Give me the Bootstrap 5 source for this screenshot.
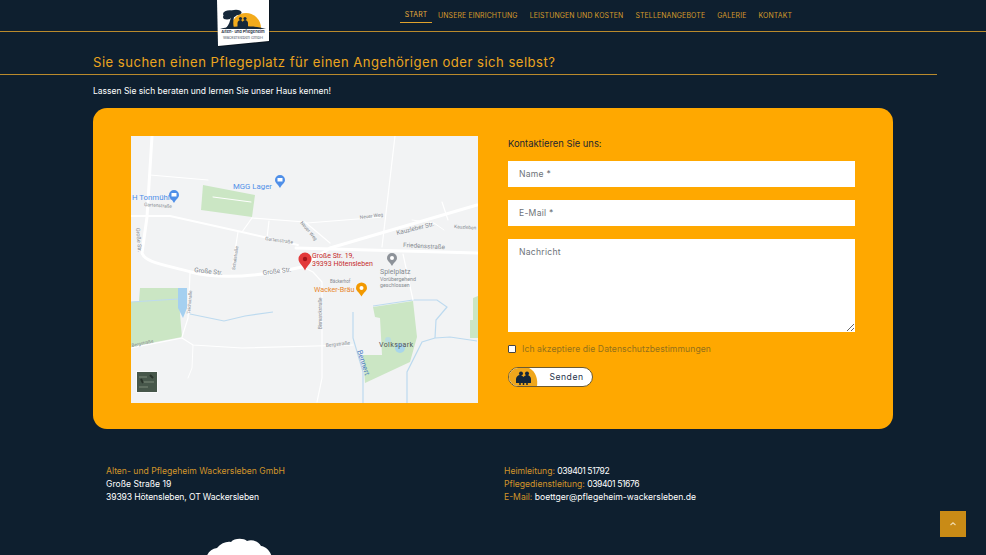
<!DOCTYPE html>
<html lang="de">
<head>
    <meta charset="UTF-8">
    <meta name="viewport" content="width=device-width, initial-scale=1.0">
    <title>Alten- und Pflegeheim Wackersleben</title>
    <link href="https://cdn.jsdelivr.net/npm/bootstrap@5.3.0/dist/css/bootstrap.min.css" rel="stylesheet">
    <style>
        html, body {
            height: 100%;
            overflow: hidden;
        }

        body {
            background: #0e1f2f;
            color: #fff;
            font-family: Inter, "Open Sans", sans-serif;
            font-size: 8.6px;
            line-height: 13px;
        }

        .navbar.top-bar {
            height: 31px;
            position: relative;
            justify-content: flex-start;
        }

        .top-rule {
            height: 1px;
            background: #b98a2c;
        }

        .top-bar .navbar-nav {
            margin-left: 400px;
            margin-top: 7px;
        }

        .navbar-expand .navbar-nav .nav-link {
            color: #d59a2a;
            font-size: 6.9px;
            line-height: 15px;
            padding: 1px 0 0;
            margin-right: 12px;
            letter-spacing: .15px;
        }

        .navbar-expand .navbar-nav .nav-link.active {
            color: #e8ad3b;
            border-bottom: 1px solid #e0a22c;
            padding: 0 4px 1px;
            margin-right: 6px;
            height: 16px;
            width: 32px;
            text-align: center;
        }

        .logo-sheet {
            position: absolute;
            left: 215px;
            top: 0;
        }

        .page-title {
            width: 937px;
            border-bottom: 1px solid #b98a2c;
            color: #eba51f;
            font-size: 13.1px;
            font-weight: 400;
            letter-spacing: .48px;
            line-height: 20px;
            margin: 20px 0 0;
            padding: 0 0 2px 93px;
        }

        .page-intro {
            margin: 10px 0 10px 93px;
            font-size: 8.5px;
            line-height: 13px;
        }

        .contact-panel {
            width: 800px;
            height: 321px;
            margin-left: 93px;
            padding: 28px 38px;
            background: #ffa800;
            border-radius: 14px;
            gap: 30px;
        }

        .map-box {
            width: 347px;
            height: 267px;
            flex: none;
            display: block;
        }

        .form-box {
            width: 347px;
            flex: none;
        }

        .form-box h6 {
            color: #1b2530;
            font-size: 9.4px;
            font-weight: 400;
            line-height: 14px;
            margin: 1px 0 10px;
        }

        .form-box .form-control {
            border: 0;
            border-radius: 0;
            height: 26px;
            min-height: 0;
            padding: 0 11px;
            margin-bottom: 13px;
            font-size: 8.6px;
            letter-spacing: .25px;
            font-family: Inter, sans-serif;
        }

        .form-box textarea.form-control {
            height: 93px;
            padding-top: 7px;
            margin-bottom: 11px;
        }

        .form-box .form-control::placeholder {
            color: #6d7278;
        }

        .consent-row {
            color: #93701c;
            font-size: 8.6px;
            letter-spacing: .08px;
            line-height: 12px;
            height: 12px;
            gap: 6px;
            margin-bottom: 12px;
        }

        .consent-row .form-check-input {
            width: 8px;
            height: 8px;
            margin: 0;
            border-radius: 1px;
            border: 1px solid #444;
        }

        .send-btn {
            width: 85px;
            height: 20px;
            padding: 0;
            border: 1px solid #6b5a32;
            border-radius: 10px;
            background: #fff;
            overflow: hidden;
            color: #27324a;
            font-size: 8.6px;
            letter-spacing: .5px;
            line-height: 18px;
        }

        .send-btn:hover {
            background: #fff;
            color: #27324a;
        }

        .send-btn svg {
            display: block;
            flex: none;
        }

        .send-btn span {
            flex: 1;
            text-align: center;
            padding-left: 3px;
        }

        .site-footer {
            width: 800px;
            margin: 36px 0 0 93px;
            font-size: 8.6px;
        }

        .site-footer .row {
            --bs-gutter-x: 0;
        }

        .site-footer .col-6:first-child {
            padding-left: 13px;
        }

        .site-footer .col-6:last-child {
            padding-left: 11px;
        }

        .gold-text {
            color: #d2952a;
        }

        .digits-tight {
            letter-spacing: -.42px;
        }

        .address-line {
            letter-spacing: -.12px;
        }

        .cloud-mark {
            display: block;
            margin: 32px 0 0 110px;
        }

        .to-top {
            position: fixed;
            left: 940px;
            top: 511px;
            width: 26px;
            height: 26px;
            padding: 0;
            border: 0;
            border-radius: 0;
            background: #c98b16;
        }
    </style>
</head>
<body>
    <nav class="navbar navbar-expand top-bar p-0 align-items-start">
        <ul class="navbar-nav">
            <li class="nav-item"><a class="nav-link active" href="#">START</a></li>
            <li class="nav-item"><a class="nav-link" href="#">UNSERE EINRICHTUNG</a></li>
            <li class="nav-item"><a class="nav-link" href="#">LEISTUNGEN UND KOSTEN</a></li>
            <li class="nav-item"><a class="nav-link" href="#">STELLENANGEBOTE</a></li>
            <li class="nav-item"><a class="nav-link" href="#">GALERIE</a></li>
            <li class="nav-item"><a class="nav-link" href="#">KONTAKT</a></li>
        </ul>
        <svg class="logo-sheet" width="56" height="49" viewBox="0 0 56 49">
            <polygon points="2,0 55,0 55,42 3,47" fill="#000" opacity=".3"/>
            <polygon points="2,0 54,0 54,41 3,46" fill="#fff"/>
            <path d="M16 28a15 15 0 0 1 30 0z" fill="#f3ab1c"/>
            <path d="M5 29c10-3 30-3.500 40-1.500c2 .5 4 1 6 1.500z" fill="#16283a"/>
            <ellipse cx="15" cy="14" rx="7" ry="3.800" fill="#16283a"/>
            <ellipse cx="21" cy="12.500" rx="5.500" ry="2.800" fill="#16283a"/>
            <ellipse cx="12" cy="17" rx="4" ry="2.500" fill="#16283a"/>
            <path d="M11 28c3-3 4-7 5-11h3c-1 4-1 8 0 11z" fill="#16283a"/>
            <circle cx="25.500" cy="18.500" r="1.600" fill="#16283a"/>
            <circle cx="30" cy="18.500" r="1.600" fill="#16283a"/>
            <path d="M22.500 28v-5c0-2 2-3 3-3s1.800 1 2.200 2c.4-1 1.300-2 2.300-2s3 1 3 3v5z" fill="#16283a"/>
            <text x="28" y="33" text-anchor="middle" font-family="Inter, sans-serif" font-size="4" font-weight="600" fill="#16283a">Alten- und Pflegeheim</text>
            <text x="28" y="38.500" text-anchor="middle" font-family="Inter, sans-serif" font-size="4" fill="#55626d">Wackersleben GmbH</text>
        </svg>
    </nav>
    <div class="top-rule"></div>

    <h1 class="page-title">Sie suchen einen Pflegeplatz für einen Angehörigen oder sich selbst?</h1>
    <p class="page-intro">Lassen Sie sich beraten und lernen Sie unser Haus kennen!</p>

    <section class="contact-panel d-flex">
        <svg class="map-box" viewBox="0 0 347 267">
            <rect width="347" height="267" fill="#f2f3f4"/>
            <!-- Gruenflaechen -->
            <polygon points="72,49 124,59 121,81 70,74" fill="#cbe6c4"/>
            <polygon points="9,152 47,152 50,190 51,201 4,210 0,212 0,166 8,165" fill="#cbe6c4"/>
            <polygon points="242,171 282,165 286,201 279,226 234,247 232,219 251,219 249,182 244,181" fill="#cbe6c4"/>
            <polygon points="339,184 342,184 342,162 347,160 347,202 339,202" fill="#cbe6c4"/>
            <!-- Wasser -->
            <polygon points="47,152 56,152 56,172 52,182 47,172" fill="#a5d0f0"/>
            <circle cx="269" cy="212" r="5" fill="#a9d6ea"/>
            <circle cx="257" cy="204" r="3" fill="#b9dde0"/>
            <g fill="none" stroke="#bddaef" stroke-width="1.200">
                <polyline points="0,166 47,163"/>
                <polyline points="59,178 93,185 114,180 142,176"/>
                <polyline points="242,170 282,164 306,164 316,171 305,184 304,202"/>
                <polyline points="304,202 319,201 346,205"/>
                <polyline points="304,202 291,206 276,236 276,267"/>
                <polyline points="222,176 222,202 232,236 232,267"/>
            </g>
            <!-- Strassen -->
            <g fill="none" stroke="#fff" stroke-linejoin="round" stroke-linecap="round">
                <path d="M21 0L16 81L11 117C14 126 30 128 60 136S130 140 171 131L199 112L346 69" stroke-width="3"/>
                <path d="M165 112L346 117" stroke-width="3"/>
                <path d="M0 80L39 80L111 96L167 109" stroke-width="1.800"/>
                <path d="M19 39L77 44" stroke-width="1.200"/>
                <path d="M121 82L174 86L199 107" stroke-width="1.200"/>
                <path d="M121 82L111 96" stroke-width="1.200"/>
                <path d="M107 96L101 134" stroke-width="1.200"/>
                <path d="M138 85L136 102" stroke-width="1.200"/>
                <path d="M82 61L120 66" stroke-width="1"/>
                <path d="M264 0L251 111" stroke-width="1.200"/>
                <path d="M176 87L252 81" stroke-width="1.200"/>
                <path d="M311 66L317 84" stroke-width="1.200"/>
                <path d="M281 84L303 87L313 94" stroke-width="1"/>
                <path d="M59 137L57 182L51 201" stroke-width="1.200"/>
                <path d="M0 212L51 202L62 209L111 212L222 209" stroke-width="1.200"/>
                <path d="M62 209L61 232L57 242" stroke-width="1"/>
                <path d="M172 131L182 136L191 146L191 242L186 266" stroke-width="1.200"/>
                <path d="M272 118L282 164" stroke-width="1.200"/>
            </g>
            <!-- Beschriftung -->
            <g font-family="Roboto, sans-serif" fill="#858a90">
                <text font-size="4.800" transform="translate(13,70) rotate(4)">Gartenstraße</text>
                <text font-size="4.800" transform="translate(134,104) rotate(8)">Gartenstraße</text>
                <text font-size="5.500" transform="translate(5,92) rotate(85)">Große Str.</text>
                <text font-size="4.500" transform="translate(104,134) rotate(-82)">Schulstraße</text>
                <text font-size="4.800" transform="translate(169,87) rotate(50)">Neuer Weg</text>
                <text font-size="4.800" transform="translate(229,83) rotate(-7)">Neuer Weg</text>
                <text font-size="6.300" transform="translate(266,99) rotate(-14)">Kauzleber Str.</text>
                <text font-size="4.800" transform="translate(323,92) rotate(4)">Kauzleben</text>
                <text font-size="6.300" transform="translate(272,111) rotate(3)">Friedensstraße</text>
                <text font-size="6.500" transform="translate(63,136) rotate(6)">Große Str.</text>
                <text font-size="6.500" transform="translate(132,139) rotate(-7)">Große Str.</text>
                <text font-size="4.500" transform="translate(59,178) rotate(-85)">Teichstraße</text>
                <text font-size="4.500" transform="translate(1,211) rotate(-12)">Bergstraße</text>
                <text font-size="5" transform="translate(195,211) rotate(-6)">Bergstraße</text>
                <text font-size="4.500" transform="translate(191,193) rotate(-90)">Bismarckstraße</text>
                <text font-size="4.500" x="199" y="147">Bäckerhof</text>
                <text font-size="7" x="249" y="138">Spielplatz</text>
                <text font-size="5.300" x="249" y="145">Vorübergehend</text>
                <text font-size="5.300" x="249" y="151">geschlossen</text>
                <text font-size="7" fill="#4f5358" letter-spacing=".4" x="248" y="211">Volkspark</text>
            </g>
            <text font-family="Roboto, sans-serif" font-size="7.500" fill="#4f7fc4" transform="translate(226,215) rotate(72)">Bennert</text>
            <g font-family="Roboto, sans-serif" fill="#4f8fe8">
                <text font-size="7.800" x="102" y="53">MGG Lager</text>
                <text font-size="7.800" x="1" y="64">H Tonmühle</text>
            </g>
            <path d="M144 44a5 5 0 0 1 10 0c0 3-3 4-5 8c-2-4-5-5-5-8z" fill="#4f8fe8"/>
            <rect x="146.500" y="42" width="5" height="3.500" fill="#fff"/>
            <path d="M38 59a5 5 0 0 1 10 0c0 3-3 4-5 8c-2-4-5-5-5-8z" fill="#4f8fe8"/>
            <rect x="40.500" y="57" width="5" height="3.500" fill="#fff"/>
            <path d="M225 152a5.500 5.500 0 0 1 11 0c0 3-3 4-5.500 8.500c-2.500-4.500-5.500-5.500-5.500-8.500z" fill="#f29900"/>
            <circle cx="230.500" cy="152" r="2" fill="#fff"/>
            <text font-family="Roboto, sans-serif" font-size="7.200" fill="#e8862a" x="183" y="155.500">Wacker-Bräu</text>
            <path d="M256 122a5 5 0 0 1 10 0c0 3-3 4-5 8c-2-4-5-5-5-8z" fill="#8d9299"/>
            <circle cx="261" cy="122" r="2" fill="#fff"/>
            <!-- Marker -->
            <path d="M167.500 123a6.500 6.500 0 0 1 13 0c0 4-4 6-6.500 11.500c-2.500-5.500-6.500-7.500-6.500-11.500z" fill="#e2393a"/>
            <circle cx="174" cy="123" r="2.200" fill="#a3141a"/>
            <g font-family="Roboto, sans-serif" font-size="7" fill="#c5292b">
                <text x="181" y="122">Große Str. 19,</text>
                <text x="181" y="130">39393 Hötensleben</text>
            </g>
            <!-- Satellit -->
            <rect x="5" y="235" width="22" height="22" fill="#fff" opacity=".6"/>
            <rect x="6" y="236" width="20" height="20" fill="#47574a"/>
            <path d="M8 241h8M12 246h11M8 251h9" stroke="#7d8a78" stroke-width="1"/>
            <path d="M19 239l3 3M10 243l2 4" stroke="#29332b" stroke-width="2"/>
        </svg>

        <form class="form-box">
            <h6>Kontaktieren Sie uns:</h6>
            <input class="form-control" type="text" placeholder="Name *">
            <input class="form-control" type="email" placeholder="E-Mail *">
            <textarea class="form-control" placeholder="Nachricht"></textarea>
            <div class="consent-row d-flex align-items-center">
                <input class="form-check-input" type="checkbox" id="consent">
                <label for="consent">Ich akzeptiere die Datenschutzbestimmungen</label>
            </div>
            <button class="btn send-btn d-flex align-items-stretch" type="button">
                <svg width="29" height="18" viewBox="0 0 29 18">
                    <path d="M0 0H20C27 3 29 12 28 18H0z" fill="#f0a71c"/>
                    <circle cx="12" cy="5.500" r="2" fill="#13263a"/>
                    <circle cx="18" cy="5.500" r="2" fill="#13263a"/>
                    <path d="M7 15V11c0-2 2-4 4-4c1 0 2 .5 3.500 2c1.500-1.500 2.500-2 3.500-2c2 0 4 2 4 4v4z" fill="#13263a"/>
                    <path d="M11 15v2M14.500 15v2M18 15v2" stroke="#13263a" stroke-width="1.500"/>
                </svg>
                <span>Senden</span>
            </button>
        </form>
    </section>

    <footer class="site-footer">
        <div class="row">
            <div class="col-6">
                <span class="gold-text">Alten- und Pflegeheim Wackersleben GmbH</span><br>
                Große Straße 19<br>
                <span class="address-line">39393 Hötensleben, OT Wackersleben</span>
            </div>
            <div class="col-6">
                <span class="gold-text">Heimleitung:</span> <span class="digits-tight">039401 51792</span><br>
                <span class="gold-text">Pflegedienstleitung:</span> <span class="digits-tight">039401 51676</span><br>
                <span class="gold-text">E-Mail:</span> boettger@pflegeheim-wackersleben.de
            </div>
        </div>
        <svg class="cloud-mark" width="72" height="30" viewBox="0 0 72 30">
            <path d="M2 30C2 20 6 13 14 12C18 7 24 5 28 6C31 2 41 2 44 5C50 3 56 6 58 10C65 11 70 18 70 30z" fill="#fff"/>
        </svg>
    </footer>

    <button class="btn to-top d-flex align-items-center justify-content-center" type="button" aria-label="Nach oben">
        <svg width="8" height="6" viewBox="0 0 8 6"><path d="M1.500 4L4 1.800L6.500 4" fill="none" stroke="#f0d9a8" stroke-width="1.200"/></svg>
    </button>

    <script src="https://cdn.jsdelivr.net/npm/bootstrap@5.3.0/dist/js/bootstrap.bundle.min.js"></script>
</body>
</html>
